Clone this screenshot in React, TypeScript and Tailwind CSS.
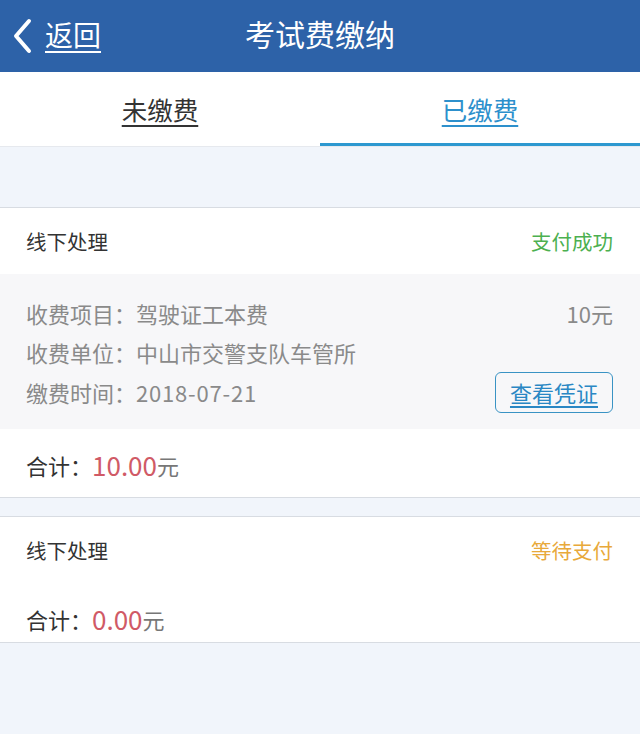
import React from "react";

const font = { fontFamily: '"Noto Sans CJK SC", "Noto Sans", sans-serif' };

function Card({
  status,
  statusColor,
  total,
  details,
  totalRowClass,
}: {
  status: string;
  statusColor: string;
  total: string;
  details?: boolean;
  totalRowClass: string;
}) {
  return (
    <div className="bg-white border-y border-[#d8dce2]">
      <div className="h-[66px] flex items-center justify-between pl-[26px] pr-[27px]">
        <span className="text-[20.5px] text-[#333]">线下处理</span>
        <span className={`text-[20.5px] ${statusColor}`}>{status}</span>
      </div>
      {details && (
        <div className="bg-[#f7f7f9] pt-[19px] pb-[16px] pl-[26px] pr-[27px] text-[22px] text-[#8a8a8a]">
          <div className="h-[40px] flex items-center justify-between">
            <span>收费项目：驾驶证工本费</span>
            <span>10元</span>
          </div>
          <div className="h-[39px] flex items-center justify-between">
            <span>收费单位：中山市交警支队车管所</span>
          </div>
          <div className="h-[41px] flex items-center justify-between">
            <span>
              缴费时间：<span className="tracking-[0.8px]">2018-07-21</span>
            </span>
            <span className="h-[41px] w-[118px] flex items-center justify-center border-[1.5px] border-[#3a93c4] rounded-[6px] text-[#2a87c4] underline underline-offset-[4px] text-[22px]">
              查看凭证
            </span>
          </div>
        </div>
      )}
      <div className={`${totalRowClass} pl-[26px] flex items-center`}>
        <span className="text-[22px] text-[#333] leading-[24px]">合计：</span>
        <span className="text-[26px] text-[#d05a66] leading-[24px]">{total}</span>
        <span className="text-[22px] text-[#777] leading-[24px]">元</span>
      </div>
    </div>
  );
}

export default function App() {
  return (
    <div style={font} className="w-[640px] h-[734px] bg-[#f1f5fb] overflow-hidden">
      <div className="h-[72px] bg-[#2d62a8] relative flex items-center justify-center pb-[5px]">
        <div className="absolute left-[12px] top-0 h-[72px] flex items-center pb-[4px]">
          <svg width="22" height="36" viewBox="0 0 22 36" className="mr-[11px] mt-[4px]">
            <path d="M17 3 L4 18 L17 33" stroke="white" strokeWidth="4" fill="none" strokeLinecap="round" strokeLinejoin="round" />
          </svg>
          <span className="text-[28px] text-white underline underline-offset-[5px] decoration-[2px]">返回</span>
        </div>
        <span className="text-[30px] text-white">考试费缴纳</span>
      </div>
      <div className="h-[75px] bg-white flex border-b border-[#e6e9ee]">
        <div className="flex-1 flex items-center justify-center">
          <span className="text-[25.5px] text-[#333] underline underline-offset-[5px]">未缴费</span>
        </div>
        <div className="flex-1 flex items-center justify-center border-b-[3px] border-[#2d98d0] pt-[3px]">
          <span className="text-[25.5px] text-[#2d90cc] underline underline-offset-[5px]">已缴费</span>
        </div>
      </div>
      <div className="h-[60px]" />
      <Card
        status="支付成功"
        statusColor="text-[#4cb050]"
        total="10.00"
        details
        totalRowClass="pt-[24px] pb-[20px]"
      />
      <div className="h-[18px]" />
      <Card
        status="等待支付"
        statusColor="text-[#e8a93a]"
        total="0.00"
        totalRowClass="pt-[24px] pb-[11px]"
      />
    </div>
  );
}
